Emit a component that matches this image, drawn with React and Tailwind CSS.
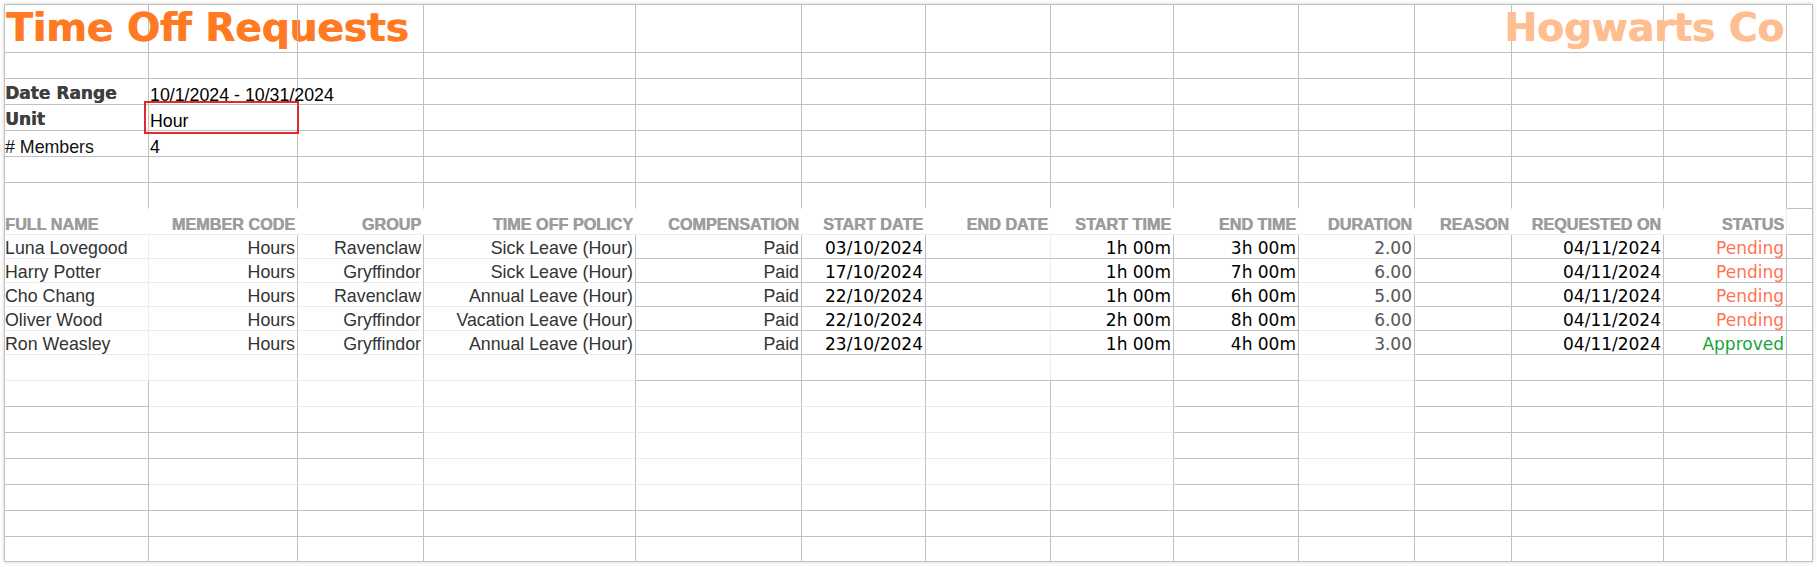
import React from "react";

const ARIAL = "font-['Liberation_Sans',Arial,sans-serif]";
const DEJA = "font-['DejaVu_Sans',Verdana,sans-serif]";

const R_CLS = { d: "border-r-[#c0c0c0]", l: "border-r-[#ececec]", n: "border-r-white" };
const B_CLS = { d: "border-b-[#c0c0c0]", l: "border-b-[#ececec]", n: "border-b-white" };

const headers = [
  "FULL NAME", "MEMBER CODE", "GROUP", "TIME OFF POLICY", "COMPENSATION", "START DATE",
  "END DATE", "START TIME", "END TIME", "DURATION", "REASON", "REQUESTED ON", "STATUS",
];

const requests = [
  ["Luna Lovegood", "Hours", "Ravenclaw", "Sick Leave (Hour)", "Paid", "03/10/2024", "", "1h 00m", "3h 00m", "2.00", "", "04/11/2024", "Pending"],
  ["Harry Potter", "Hours", "Gryffindor", "Sick Leave (Hour)", "Paid", "17/10/2024", "", "1h 00m", "7h 00m", "6.00", "", "04/11/2024", "Pending"],
  ["Cho Chang", "Hours", "Ravenclaw", "Annual Leave (Hour)", "Paid", "22/10/2024", "", "1h 00m", "6h 00m", "5.00", "", "04/11/2024", "Pending"],
  ["Oliver Wood", "Hours", "Gryffindor", "Vacation Leave (Hour)", "Paid", "22/10/2024", "", "2h 00m", "8h 00m", "6.00", "", "04/11/2024", "Pending"],
  ["Ron Weasley", "Hours", "Gryffindor", "Annual Leave (Hour)", "Paid", "23/10/2024", "", "1h 00m", "4h 00m", "3.00", "", "04/11/2024", "Approved"],
];

// gridline colour per cell: d = sheet grid, l = faint, n = hidden
const dataR = ["l", "d", "d", "d", "d", "d", "l", "d", "d", "d", "d", "d", "d", "d"];
const dataB = ["l", "l", "l", "l", "d", "d", "d", "d", "d", "l", "d", "d", "d", "d"];
const afterB = ["l", "l", "l", "l", "d", "d", "d", "d", "d", "l", "d", "d", "d", "d"];

function borders(r, c) {
  if (r === 6) return { r: "d", b: c <= 12 ? "n" : "d" };
  if (r === 7) return { r: c <= 11 ? "n" : c === 12 ? "l" : "d", b: c <= 12 ? "l" : "d" };
  if (r >= 8 && r <= 12) return { r: dataR[c], b: dataB[c] };
  if (r === 13) return { r: c === 0 || c === 6 ? "l" : "d", b: afterB[c] };
  if (r >= 14 && r <= 17) {
    let b = "d";
    if (c === 1 || c === 2) b = r === 15 || r === 16 ? "d" : "l";
    else if ((c >= 3 && c <= 7) || c === 9) b = "l";
    return { r: "d", b };
  }
  return { r: "d", b: "d" };
}

function cellContent(r, c) {
  if (r === 0 && c === 0)
    return {
      box: "items-start pt-[3px] pl-[1px]",
      node: (
        <span className={`${DEJA} font-bold text-[39px] leading-[39px] text-[#ff7a22] [text-shadow:0.8px_0_0_#ff7a22]`}>
          Time Off Requests
        </span>
      ),
    };
  if (r === 0 && c === 12)
    return {
      box: "items-start justify-end pt-[3px] pr-[2px]",
      node: (
        <span className={`${DEJA} font-bold text-[39px] leading-[39px] text-[#ffbe8f] [text-shadow:0.8px_0_0_#ffbe8f]`}>
          Hogwarts Co
        </span>
      ),
    };
  if (r >= 2 && r <= 4 && c === 0) {
    if (r === 4)
      return { box: "items-end", node: <span className={`${ARIAL} text-[17.8px] leading-[18px] text-[#111]`}># Members</span> };
    return {
      box: "items-end pb-[2px]",
      node: (
        <span className={`${DEJA} font-bold text-[17px] leading-[17px] text-[#3f3f3f] [text-shadow:0.4px_0_0_#3f3f3f]`}>
          {r === 2 ? "Date Range" : "Unit"}
        </span>
      ),
    };
  }
  if (r >= 2 && r <= 4 && c === 1) {
    const v = r === 2 ? "10/1/2024 - 10/31/2024" : r === 3 ? "Hour" : "4";
    return {
      box: "items-end pl-[1px] relative",
      node: (
        <>
          <span className={`${ARIAL} text-[17.8px] leading-[18px] text-black`}>{v}</span>
          {r === 3 && <div className="absolute -top-[4px] -bottom-[4px] -left-[5px] -right-[2px] border-2 border-[#de2a2e] z-10" />}
        </>
      ),
    };
  }
  if (r === 7 && c <= 12)
    return {
      box: `items-end pb-[2px] ${c === 0 ? "" : "justify-end pr-[2px]"}`,
      node: (
        <span className={`${ARIAL} font-bold text-[16.2px] leading-[16px] text-[#9c9c9c] [text-shadow:0.5px_0_0_#9c9c9c]`}>
          {headers[c]}
        </span>
      ),
    };
  if (r >= 8 && r <= 12 && c <= 12) {
    const v = requests[r - 8][c];
    if (!v) return null;
    let cls = `${ARIAL} text-[17.8px] leading-[18px] text-[#333]`;
    if ([5, 7, 8, 11].includes(c)) cls = `${DEJA} text-[17px] leading-[17px] text-black`;
    if (c === 9) cls = `${DEJA} text-[17px] leading-[17px] text-[#555]`;
    if (c === 12)
      cls = `${DEJA} text-[17px] leading-[17px] ${v === "Approved" ? "text-[#16a43a]" : "text-[#ff7352]"}`;
    return {
      box: `items-end pb-[1px] ${c === 0 ? "" : "justify-end pr-[2px]"}`,
      node: <span className={cls}>{v}</span>,
    };
  }
  return null;
}

export default function App() {
  const cells = [];
  for (let r = 0; r < 21; r++) {
    for (let c = 0; c < 14; c++) {
      const b = borders(r, c);
      const content = cellContent(r, c);
      cells.push(
        <div
          key={`${r}-${c}`}
          className={`flex whitespace-nowrap overflow-visible border-r border-b ${R_CLS[b.r]} ${B_CLS[b.b]} ${content ? content.box : ""}`}
        >
          {content && content.node}
        </div>
      );
    }
  }

  return (
    <div className="min-h-screen bg-white pt-[4px] pl-[4px]">
      <div className="inline-block bg-white border-l border-t border-[#c0c0c0] shadow-[0_0_4px_rgba(0,0,0,0.18)]">
        <div className="grid grid-cols-[144px_149px_126px_212px_166px_124px_125px_123px_125px_116px_97px_152px_123px_26px] grid-rows-[48px_26px_26px_26px_26px_26px_26px_26px_24px_24px_24px_24px_24px_26px_26px_26px_26px_26px_26px_26px_25px]">
          {cells}
        </div>
      </div>
    </div>
  );
}
